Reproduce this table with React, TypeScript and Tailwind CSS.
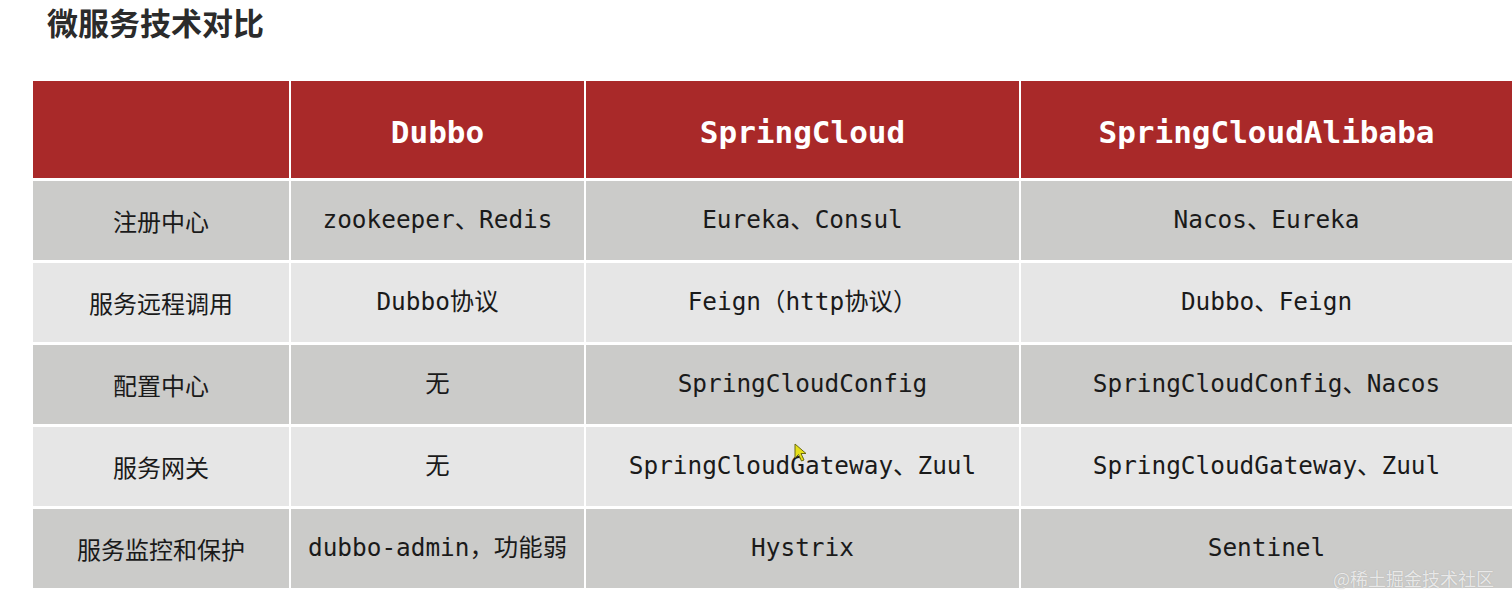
import React from "react";

const rows: string[][] = [
  ["注册中心", "zookeeper、Redis", "Eureka、Consul", "Nacos、Eureka"],
  ["服务远程调用", "Dubbo协议", "Feign（http协议）", "Dubbo、Feign"],
  ["配置中心", "无", "SpringCloudConfig", "SpringCloudConfig、Nacos"],
  ["服务网关", "无", "SpringCloudGateway、Zuul", "SpringCloudGateway、Zuul"],
  ["服务监控和保护", "dubbo-admin，功能弱", "Hystrix", "Sentinel"],
];

const mono = "font-['DejaVu_Sans_Mono','Noto_Sans_CJK_SC',monospace]";

export default function App() {
  return (
    <div className="w-[1512px] h-[608px] bg-white overflow-hidden relative font-['Noto_Sans_CJK_SC',sans-serif]">
      <div className="pl-[47px] h-[81px]">
        <h1 className="text-[31px] leading-[44px] font-bold text-[#2b2b2b] font-['Noto_Sans_CJK_SC',sans-serif]">
          微服务技术对比
        </h1>
      </div>
      <div className="pl-[33px]">
        <div className="grid grid-cols-[256px_293px_433px_491px] gap-x-[2px] gap-y-[3px] bg-white">
          <div className="h-[97px] bg-[#a92929]" />
          {["Dubbo", "SpringCloud", "SpringCloudAlibaba"].map((h) => (
            <div
              key={h}
              className={`h-[97px] bg-[#a92929] flex items-center justify-center text-white text-[31px] font-bold pt-[5px] ${mono}`}
            >
              {h}
            </div>
          ))}
          {rows.map((r, i) =>
            r.map((c, j) => (
              <div
                key={`${i}-${j}`}
                className={`h-[79px] flex items-center justify-center text-[#1a1a1a] ${
                  i % 2 === 0 ? "bg-[#cbcbc9]" : "bg-[#e6e6e6]"
                } ${j === 0 ? "text-[24px] font-['Noto_Sans_CJK_SC',sans-serif]" : `text-[24.4px] ${mono}`}`}
              >
                {c}
              </div>
            ))
          )}
        </div>
      </div>
      <div className="absolute left-[1333px] top-[566px] text-[18px] leading-[24px] text-white/75 [text-shadow:0_0_1px_#a0a0a0] font-['Noto_Sans_CJK_SC',sans-serif]">
        @稀土掘金技术社区
      </div>
      <svg className="absolute left-[794px] top-[443px]" width="16" height="20" viewBox="0 0 16 20">
        <path d="M1 1 L1 15 L4.5 11.5 L7.5 18 L10 17 L7 10.5 L12 10.5 Z" fill="#e6e01a" stroke="#6b6a10" strokeWidth="1" />
      </svg>
    </div>
  );
}
